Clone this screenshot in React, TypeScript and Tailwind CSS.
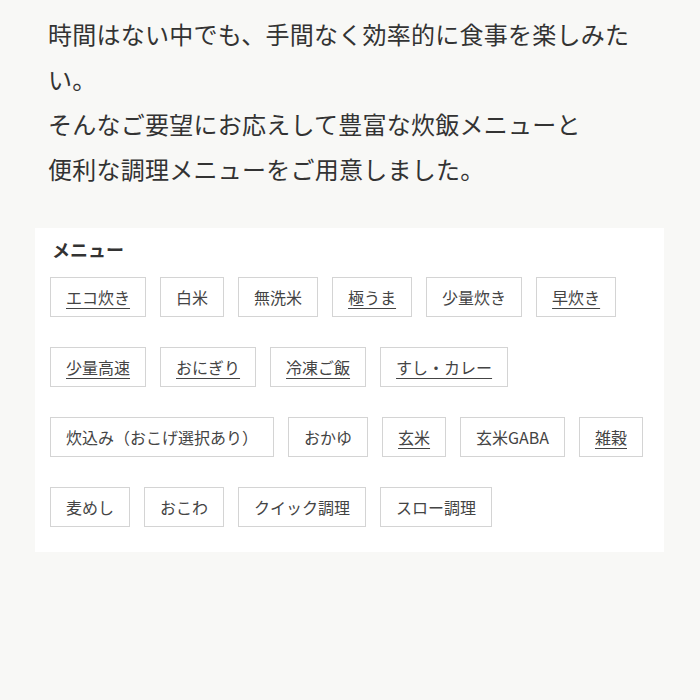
const items: { label: string; link?: boolean }[] = [
  { label: "エコ炊き", link: true },
  { label: "白米" },
  { label: "無洗米" },
  { label: "極うま", link: true },
  { label: "少量炊き" },
  { label: "早炊き", link: true },
  { label: "少量高速", link: true },
  { label: "おにぎり", link: true },
  { label: "冷凍ご飯", link: true },
  { label: "すし・カレー", link: true },
  { label: "炊込み（おこげ選択あり）" },
  { label: "おかゆ" },
  { label: "玄米", link: true },
  { label: "玄米GABA" },
  { label: "雑穀", link: true },
  { label: "麦めし" },
  { label: "おこわ" },
  { label: "クイック調理" },
  { label: "スロー調理" },
];

export default function App() {
  return (
    <div className="min-h-[700px] bg-[#f8f8f6] text-[#333] font-['Noto_Sans_CJK_JP','Noto_Sans',sans-serif]">
      <div className="px-[48px] pt-[11px]">
        <p className="text-[24px] leading-[45px] tracking-[0.25px]">
          時間はない中でも、手間なく効率的に食事を楽しみたい。
          <br />
          そんなご要望にお応えして豊富な炊飯メニューと
          <br />
          便利な調理メニューをご用意しました。
        </p>
      </div>

      <section className="ml-[35px] mt-[37px] w-[629px] bg-white px-[15px] pt-[8px] pb-[25px]">
        <h2 className="text-[18px] font-bold leading-[26px] pl-[2px]">メニュー</h2>
        <ul className="mt-[15px] flex flex-wrap gap-x-[14px] gap-y-[30px]">
          {items.map((it) => (
            <li
              key={it.label}
              className="border border-[#d4d4d4] px-[15px] py-[7px] text-[16px] leading-[24px] text-[#444]"
            >
              {it.link ? (
                <a href="#" className="underline underline-offset-[4px] decoration-1">
                  {it.label}
                </a>
              ) : (
                it.label
              )}
            </li>
          ))}
        </ul>
      </section>
    </div>
  );
}
